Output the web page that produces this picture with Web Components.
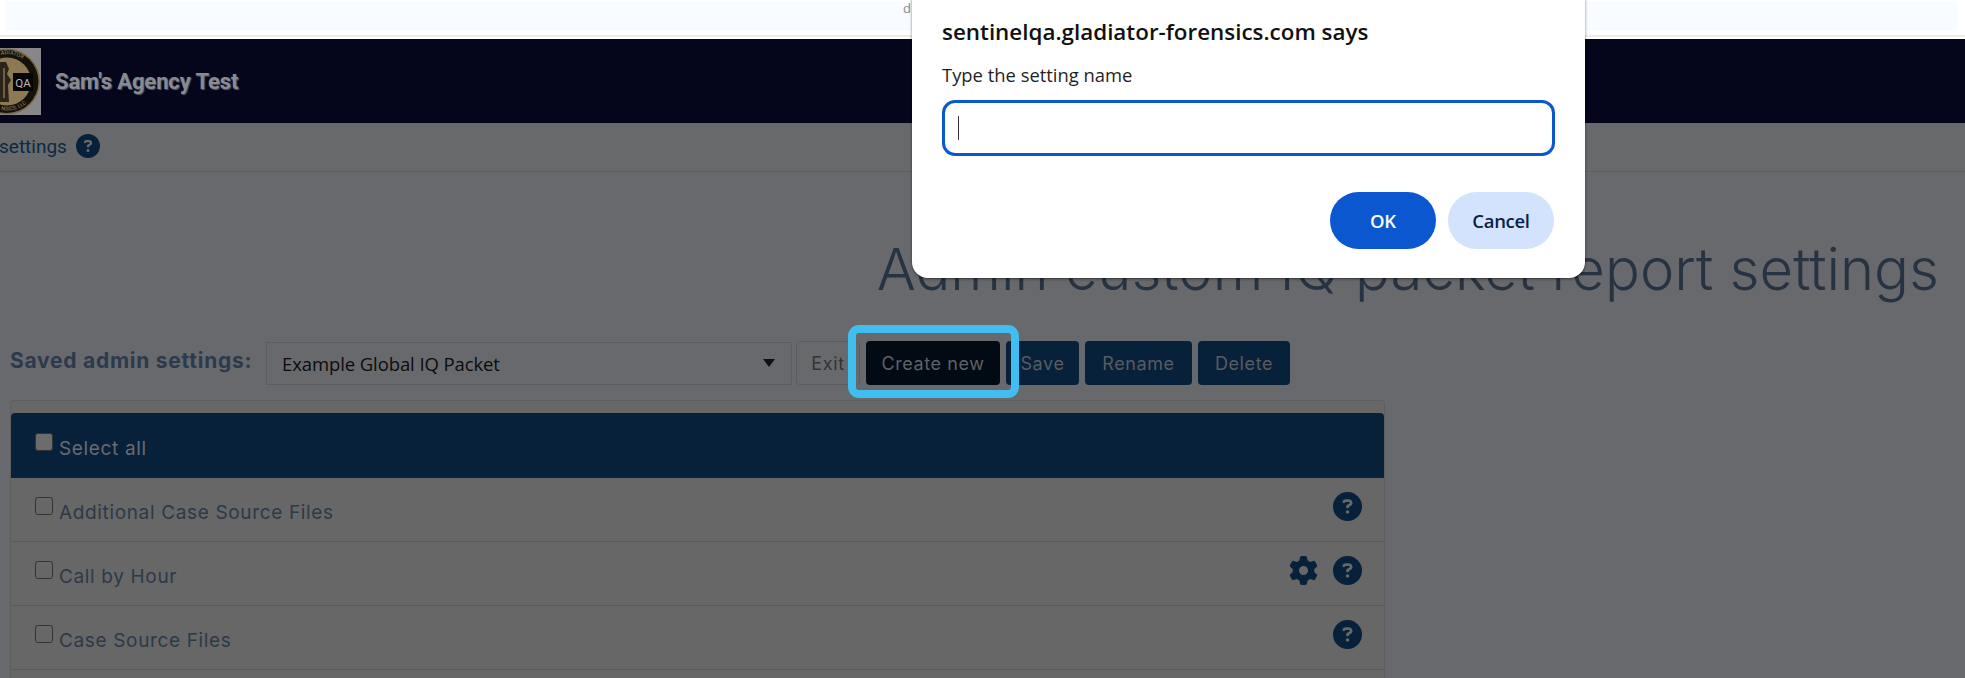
<!DOCTYPE html>
<html lang="en">
<head>
<meta charset="utf-8">
<title>Admin custom IQ packet report settings</title>
<style>
    html, body { margin: 0; height: 678px; overflow: hidden; background: #67696d; }
    body { font-family: "Inter", "Liberation Sans", sans-serif; position: relative; }
</style>
</head>
<body>
<top-strip></top-strip>
<nav-bar>Sam's Agency Test</nav-bar>
<sub-header>settings</sub-header>
<page-title>Admin custom IQ packet report settings</page-title>
<settings-toolbar>
    <action-button variant="plain" w="64">Exit</action-button>
    <action-button variant="active" w="134">Create new</action-button>
    <action-button w="73">Save</action-button>
    <action-button w="107">Rename</action-button>
    <action-button w="92">Delete</action-button>
</settings-toolbar>
<report-list>
    <report-row header>Select all</report-row>
    <report-row help>Additional Case Source Files</report-row>
    <report-row help gear>Call by Hour</report-row>
    <report-row help>Case Source Files</report-row>
    <report-row></report-row>
</report-list>
<prompt-dialog title-text="sentinelqa.gladiator-forensics.com says" message="Type the setting name"></prompt-dialog>

<script>
const QUESTION = 'M256 512A256 256 0 1 0 256 0a256 256 0 1 0 0 512zM169.8 165.3c7.9-22.3 29.1-37.3 52.8-37.3h58.3c34.9 0 63.1 28.3 63.1 63.1c0 22.6-12.1 43.5-31.7 54.8L280 264.4c-.2 13-10.9 23.6-24 23.6c-13.3 0-24-10.7-24-24V250.5c0-8.6 4.6-16.5 12.1-20.8l44.3-25.4c4.7-2.7 7.6-7.7 7.6-13.1c0-8.4-6.8-15.1-15.1-15.1H222.6c-3.4 0-6.4 2.1-7.5 5.3l-.4 1.2c-4.4 12.5-18.2 19-30.6 14.6s-19-18.2-14.6-30.6l.4-1.2zM224 352a32 32 0 1 1 64 0 32 32 0 1 1 -64 0z';
const GEAR = 'M495.9 166.6c3.2 8.7 .5 18.4-6.4 24.6l-43.3 39.4c1.1 8.3 1.7 16.8 1.7 25.4s-.6 17.1-1.7 25.4l43.3 39.4c6.9 6.2 9.6 15.9 6.4 24.6c-4.4 11.9-9.7 23.3-15.8 34.3l-4.7 8.1c-6.6 11-14 21.4-22.1 31.2c-5.9 7.2-15.7 9.6-24.5 6.8l-55.7-17.7c-13.4 10.3-28.2 18.9-44 25.4l-12.5 57.1c-2 9.1-9 16.3-18.2 17.8c-13.8 2.3-28 3.5-42.5 3.5s-28.7-1.2-42.5-3.5c-9.2-1.5-16.2-8.7-18.2-17.8l-12.5-57.1c-15.8-6.5-30.6-15.1-44-25.4L83.1 425.9c-8.8 2.8-18.6 .3-24.5-6.8c-8.1-9.8-15.5-20.2-22.1-31.2l-4.7-8.1c-6.1-11-11.4-22.4-15.8-34.3c-3.2-8.7-.5-18.4 6.4-24.6l43.3-39.4C64.6 273.1 64 264.6 64 256s.6-17.1 1.7-25.4L22.4 191.2c-6.9-6.2-9.6-15.9-6.4-24.6c4.4-11.9 9.7-23.3 15.8-34.3l4.7-8.1c6.6-11 14-21.4 22.1-31.2c5.9-7.2 15.7-9.6 24.5-6.8l55.7 17.7c13.4-10.3 28.2-18.9 44-25.4l12.5-57.1c2-9.1 9-16.3 18.2-17.8C227.3 1.2 241.5 0 256 0s28.7 1.2 42.5 3.5c9.2 1.5 16.2 8.7 18.2 17.8l12.5 57.1c15.8 6.5 30.6 15.1 44 25.4l55.7-17.7c8.8-2.8 18.6-.3 24.5 6.8c8.1 9.8 15.5 20.2 22.1 31.2l4.7 8.1c6.1 11 11.4 22.4 15.8 34.3zM256 336a80 80 0 1 0 0-160 80 80 0 1 0 0 160z';

function icon(path, size, color) {
    return `<svg width="${size}" height="${size}" viewBox="0 0 512 512" style="display:block;flex:none"><path fill="${color}" fill-rule="evenodd" d="${path}"/></svg>`;
}

class Base extends HTMLElement {
    constructor(html) {
        super();
        this.attachShadow({ mode: 'open' });
        this.shadowRoot.innerHTML = html;
    }
}

customElements.define('top-strip', class extends Base {
    constructor() {
        super(`
            <style>
                :host { display: block; height: 39px; background: #fff; box-sizing: border-box; padding: 1px 7px 6px 5px; border-bottom: 2px solid #fff; box-shadow: inset 0 -2px 0 #ececec; }
                .strip { height: 100%; background: #f8fbff; padding-left: 898px; font: 13px/15px "Open Sans", sans-serif; color: #8a8a8a; }
            </style>
            <div class="strip">d</div>
        `);
    }
});

customElements.define('nav-bar', class extends Base {
    constructor() {
        super(`
            <style>
                :host { display: flex; align-items: center; gap: 14px; height: 84px; background: #05051c; overflow: hidden; }
                svg { flex: none; display: block; }
                .name { font: 700 22px Roboto, sans-serif; color: #8a8b92; text-shadow: 1px 1px 1px #55565c; letter-spacing: -.1px; }
            </style>
            <svg width="41" height="67" viewBox="0 0 41 67">
                <defs>
                    <path id="top-arc" d="M1 7a27 27 0 0 1 33 27"/>
                    <path id="bottom-arc" d="M1 62a29 29 0 0 0 35-25"/>
                </defs>
                <rect width="41" height="67" fill="#87878a"/>
                <circle cx="7" cy="33.5" r="33" fill="#7d6a47"/>
                <circle cx="7" cy="33.5" r="31.5" fill="#15120c"/>
                <circle cx="7" cy="33.5" r="24" fill="#8d7a55"/>
                <text font-family="Roboto, sans-serif" font-size="5.5" fill="#a08c66"><textPath href="#top-arc">ADIATOR</textPath></text>
                <text font-family="Roboto, sans-serif" font-size="5.5" fill="#a08c66"><textPath href="#bottom-arc">NSICS, LLC</textPath></text>
                <path d="M0 14h6l3 7-2 5 4 6-3 5 1 17H0z" fill="#2b2418"/>
                <path d="M3 20h2v30H3z" fill="#6e5f43"/>
                <rect x="13" y="25" width="20" height="18" fill="#050505"/>
                <text x="23" y="39" text-anchor="middle" font-family="Roboto, sans-serif" font-size="11.5" fill="#b9b9bb">QA</text>
            </svg>
            <span class="name"><slot></slot></span>
        `);
    }
});

customElements.define('sub-header', class extends Base {
    constructor() {
        super(`
            <style>
                :host { display: flex; align-items: center; gap: 9px; height: 48px; border-bottom: 1px solid #5d5e60; background: #68696b; }
                .t { font: 400 19px Roboto, sans-serif; color: #0b2a42; margin-left: -1px; margin-top: -2px; }
                svg { margin-top: -2px; }
            </style>
            <span class="t"><slot></slot></span>
            ${icon(QUESTION, 24, '#08213a')}
        `);
    }
});

customElements.define('page-title', class extends Base {
    constructor() {
        super(`
            <style>
                :host { display: block; text-align: right; padding: 64px 26px 0 0; height: 169px; box-sizing: border-box; }
                h1 { margin: 0; font: 300 58px/66px Inter, sans-serif; color: #283342; white-space: nowrap; }
            </style>
            <h1><slot></slot></h1>
        `);
    }
});

customElements.define('action-button', class extends Base {
    constructor() {
        super(`
            <style>
                :host { display: flex; align-items: center; justify-content: center; height: 44px; box-sizing: border-box; border-radius: 4px; font: 400 18px Inter, sans-serif; letter-spacing: .6px; background: #08213a; color: #585b5f; }
                :host([variant="plain"]) { background: transparent; border: 1px solid #5b5c5e; color: #333436; }
                :host([variant="active"]) { background: #020b14; color: #5e6165; }
            </style>
            <slot></slot>
        `);
    }
    connectedCallback() {
        this.style.width = this.getAttribute('w') + 'px';
    }
});

customElements.define('settings-toolbar', class extends Base {
    constructor() {
        super(`
            <style>
                :host { display: flex; align-items: center; gap: 6px; height: 44px; padding-left: 10px; position: relative; }
                .label { font: 700 21px Inter, sans-serif; letter-spacing: .75px; color: #2d3a4c; width: 250px; flex: none; margin-top: -5px; white-space: nowrap; }
                .select { flex: none; width: 526px; height: 43px; box-sizing: border-box; border: 1px solid #5d5e60; display: flex; align-items: center; justify-content: space-between; padding: 0 16px 0 15px; font: 400 18.5px "Open Sans", sans-serif; color: #0c0c0c; letter-spacing: -.1px; margin-right: -2px; }
                .arrow { width: 0; height: 0; border-left: 6px solid transparent; border-right: 6px solid transparent; border-top: 8px solid #111; }
                .ring { position: absolute; left: 848px; top: -16px; width: 171px; height: 73px; box-sizing: border-box; border: 8px solid #40bef0; border-radius: 11px; }
            </style>
            <span class="label">Saved admin settings:</span>
            <div class="select"><span>Example Global IQ Packet</span><span class="arrow"></span></div>
            <slot></slot>
            <div class="ring"></div>
        `);
    }
});

customElements.define('report-list', class extends Base {
    constructor() {
        super(`
            <style>
                :host { display: block; width: 1375px; height: 278px; overflow: hidden; box-sizing: border-box; margin: 15px 0 0 10px; border: 1px solid #5d5e60; border-bottom: 0; border-radius: 4px 4px 0 0; padding-top: 12px; background: #666766; }
            </style>
            <slot></slot>
        `);
    }
});

customElements.define('report-row', class extends Base {
    constructor() {
        super(`
            <style>
                :host { display: flex; align-items: center; height: 64px; box-sizing: border-box; padding: 0 22px 0 24px; border-bottom: 1px solid #5a5b5c; font: 400 19px Inter, sans-serif; letter-spacing: .65px; color: #2d3949; }
                :host([header]) { background: #08213a; color: #686b6f; border: 0; border-radius: 4px 4px 0 0; height: 65px; }
                .box { width: 18px; height: 18px; box-sizing: border-box; border: 1.5px solid #333; border-radius: 3px; margin-right: 6px; flex: none; margin-top: -7px; }
                :host([header]) .box { background: #6c6c6c; }
                .label { flex: 1; margin-top: 5px; }
                .icons { display: flex; gap: 15px; margin-top: -7px; }
            </style>
            <span class="box"></span>
            <span class="label"><slot></slot></span>
            <span class="icons"></span>
        `);
    }
    connectedCallback() {
        // a row without a label is the one cut off by the window
        if (!this.textContent.trim()) this.shadowRoot.querySelector('.box').style.visibility = 'hidden';
        let html = '';
        if (this.hasAttribute('gear')) html += icon(GEAR, 29, '#08213a');
        if (this.hasAttribute('help')) html += icon(QUESTION, 29, '#08213a');
        this.shadowRoot.querySelector('.icons').innerHTML = html;
    }
});

customElements.define('prompt-dialog', class extends Base {
    constructor() {
        super(`
            <style>
                :host { position: absolute; left: 912px; top: -20px; width: 673px; height: 298px; box-sizing: border-box; padding: 40px 30px 0 30px; background: #fff; border-radius: 0 0 16px 16px; box-shadow: 0 1px 3px rgba(0,0,0,.5); display: flex; flex-direction: column; font-family: "Open Sans", sans-serif; color: #1f1f1f; }
                .title { font-size: 22.4px; font-weight: 600; line-height: 24px; color: #111; white-space: nowrap; }
                .msg { font-size: 18.4px; line-height: 24px; margin-top: 19px; }
                .input { height: 56px; margin-top: 13px; box-sizing: border-box; border: 3px solid #0b57d0; border-radius: 13px; display: flex; align-items: center; padding-left: 13px; }
                .caret { width: 1px; height: 24px; background: #333; }
                .buttons { display: flex; justify-content: flex-end; gap: 12px; margin: 36px 1px 0 0; }
                .btn { width: 106px; height: 57px; border-radius: 29px; display: flex; align-items: center; justify-content: center; font-size: 18.5px; font-weight: 600; letter-spacing: -.3px; }
                .ok { background: #0b57d0; color: #fff; }
                .cancel { background: #d3e3fd; color: #0a1f44; }
            </style>
            <div class="title"></div>
            <div class="msg"></div>
            <div class="input"><span class="caret"></span></div>
            <div class="buttons"><div class="btn ok">OK</div><div class="btn cancel">Cancel</div></div>
        `);
    }
    connectedCallback() {
        this.shadowRoot.querySelector('.title').textContent = this.getAttribute('title-text');
        this.shadowRoot.querySelector('.msg').textContent = this.getAttribute('message');
    }
});
</script>
</body>
</html>
